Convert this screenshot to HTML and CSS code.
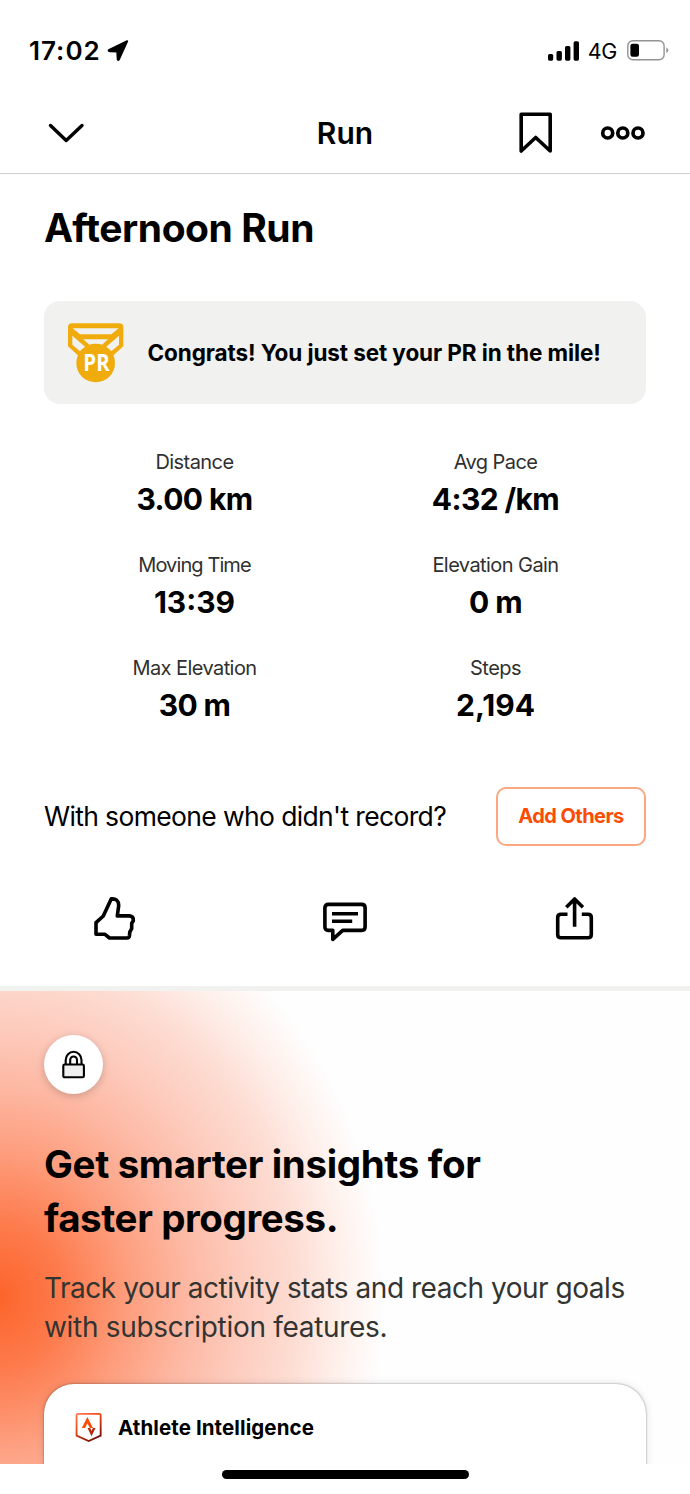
FILE: index.html
```html
<!DOCTYPE html>
<html lang="en">
<head>
<meta charset="utf-8">
<title>Afternoon Run</title>
<link rel="stylesheet" href="styles.css">
</head>
<body>
<div class="screen">
  <header class="status">
    <div class="status-left">
      <span class="clock">17:02</span>
      <svg width="22" height="22" viewBox="0 0 22 22"><path d="M20.2 1.2 11.8 19.6Q11 20.600 10.700 19L10.300 11.600 2.800 11.200Q.8 10.900 2.300 9.800Z" stroke="#000" stroke-width="2" stroke-linejoin="round"/></svg>
    </div>
    <div class="status-right">
      <svg width="32" height="20" viewBox="0 0 32 20"><rect x="0" y="13" width="5.200" height="6.700" rx="1.6"/><rect x="8.500" y="10" width="5.400" height="9.700" rx="1.6"/><rect x="17" y="5" width="5.400" height="14.700" rx="1.6"/><rect x="25.600" y=".3" width="5.400" height="19.400" rx="1.6"/></svg>
      <span class="network">4G</span>
      <svg width="42" height="21" viewBox="0 0 42 21"><rect x=".8" y=".8" width="36.300" height="19" rx="5" fill="none" stroke="#939393" stroke-width="1.4"/><rect x="3.400" y="3.800" width="8.600" height="13" rx="2.2"/><path d="M39.300 7.300Q43.400 10.300 39.300 13.300Z" fill="#939393"/></svg>
    </div>
  </header>

  <nav class="nav">
    <svg width="38" height="20" viewBox="0 0 38 20"><path d="M3.500 2.500 19.200 17.500 35 2.500" fill="none" stroke="#000" stroke-width="3.400" stroke-linejoin="round" stroke-linecap="round"/></svg>
    <span class="nav-title">Run</span>
    <div class="nav-actions">
      <svg width="34" height="42" viewBox="0 0 34 42"><path d="M2.200 2.300H31.200V39L16.700 25.500 2.200 39Z" fill="none" stroke="#000" stroke-width="3.600" stroke-linejoin="round"/></svg>
      <svg width="46" height="16" viewBox="0 0 46 16"><g fill="none" stroke="#000" stroke-width="3.700"><circle cx="7.700" cy="8" r="5"/><circle cx="22.800" cy="8" r="5"/><circle cx="38" cy="8" r="5"/></g></svg>
    </div>
  </nav>

  <main class="activity">
    <h1 class="title">Afternoon Run</h1>

    <div class="banner">
      <svg width="56" height="60" viewBox="114 98 168 180">
        <path fill="#f0ac0c" d="M126 99H268Q280 99 280 111V168L238 206H156L114 168V111Q114 99 126 99Z"/>
        <path fill="#f1f1ef" d="M128 114H266L244 132H150ZM127 136 166 170 150 183 127 163ZM267 136 228 170 244 183 267 163ZM160 147H234L216 163H178Z"/>
        <circle cx="197" cy="218" r="58" fill="#f0ac0c"/>
        <text class="medal-text" x="160" y="242" textLength="79" lengthAdjust="spacingAndGlyphs">PR</text>
      </svg>
      <span class="banner-text">Congrats! You just set your PR in the mile!</span>
    </div>

    <div class="stats">
      <div class="stat"><span class="label">Distance</span><span class="value">3.00 km</span></div>
      <div class="stat"><span class="label">Avg Pace</span><span class="value">4:32 /km</span></div>
      <div class="stat"><span class="label label-tight">Moving Time</span><span class="value value-digits">13:39</span></div>
      <div class="stat"><span class="label">Elevation Gain</span><span class="value">0 m</span></div>
      <div class="stat"><span class="label">Max Elevation</span><span class="value">30 m</span></div>
      <div class="stat"><span class="label">Steps</span><span class="value value-digits">2,194</span></div>
    </div>

    <div class="others">
      <span class="others-text">With someone who didn't record?</span>
      <button class="others-button">Add Others</button>
    </div>
  </main>

  <div class="actions">
    <svg width="48" height="48" viewBox="0 0 48 48"><path d="M20.200 3.900Q27.700 3.300 27.700 10.500L26.300 20.900H38.500Q42.700 21.300 42.300 25.700L40.700 28.300 40.700 33.700 38.800 37 38.500 40.500Q38.200 43 36 43H18.500L13.700 39.200H5V27.700L12.300 21Z"/></svg>
    <svg width="48" height="48" viewBox="0 0 48 48"><path d="M7.300 9.400H40.700Q44.100 9.400 44.100 12.800V32Q44.100 35.400 40.700 35.400H21.700L11.800 44.400V35.400H7.300Q3.900 35.400 3.900 32V12.800Q3.900 9.400 7.300 9.400ZM11 18.700H37M11 26.300H31.200"/></svg>
    <svg width="48" height="48" viewBox="0 0 48 48"><path d="M16.500 19.200H10Q6.700 19.200 6.700 22.500V39.500Q6.700 42.800 10 42.800H37Q40.300 42.800 40.300 39.500V22.500Q40.300 19.200 37 19.200H30.800M23.600 31.800V3.800M15.300 12.300 23.600 3.900 31.900 12.300"/></svg>
  </div>

  <section class="promo">
    <div class="lock">
      <svg width="24" height="30" viewBox="0 0 24 30"><g fill="none" stroke="#000" stroke-width="2.100"><path d="M3.700 15.500V10A7.900 8.200 0 0 1 19.500 10V15.500M8.200 15.500V10.200A3.400 3.700 0 0 1 15 10.200V15.500"/><rect x="1.300" y="14.500" width="20.600" height="12.800" rx="1.4" fill="#efefef"/></g></svg>
    </div>
    <h2 class="promo-title">Get smarter insights for<br><span class="promo-line">faster progress.</span></h2>
    <p class="promo-text">Track your activity stats and reach your goals<br><span class="promo-text-end">with subscription features.</span></p>
    <div class="insight">
      <svg width="27.4" height="30.6" viewBox="134 126 82 92">
        <defs><linearGradient id="shield" x1="0" y1="0" x2=".6" y2="1"><stop offset="0" stop-color="#ff7b50"/><stop offset=".45" stop-color="#f04713"/><stop offset="1" stop-color="#7d1209"/></linearGradient></defs>
        <path d="M143 131.500H207Q211 131.500 211 135.500V197L175 213.500 138.500 197V135.500Q138.500 131.500 143 131.500Z" fill="none" stroke="url(#shield)" stroke-width="5.500"/>
        <path d="M171 141 188 174H178.500L171 160 164 174H154.500Z" fill="#fc4c02"/>
        <path d="M171.500 174H179.500L183.500 183 187.500 174H195.500L183.500 199Z" fill="#b52a0c"/>
      </svg>
      <span class="insight-title">Athlete Intelligence</span>
    </div>
  </section>

  <footer class="home"><div class="home-bar"></div></footer>
</div>
</body>
</html>
```
FILE: styles.css
```css
* { box-sizing: border-box; }
body { margin: 0; background: #fff; color: #000; font-family: Inter, "Liberation Sans", sans-serif; }
svg { display: block; flex: none; }
h1, h2, p { margin: 0; }
span, h1, h2, p { white-space: nowrap; }

.screen { width: 690px; height: 1494px; display: flex; flex-direction: column; overflow: hidden; }

.status { height: 94px; padding: 7px 21px 0 29px; display: flex; justify-content: space-between; align-items: center; }
.status-left, .status-right { display: flex; align-items: center; }
.status-left { gap: 6px; }
.clock { font-size: 26px; font-weight: 600; letter-spacing: 1px; }
.network { font-size: 21.5px; letter-spacing: -0.4px; margin: 0 10px 0 8px; }

.nav { height: 80px; padding: 0 44px 1px 47px; border-bottom: 1.5px solid #cfcfcf; display: grid; grid-template-columns: 1fr auto 1fr; align-items: center; }
.nav-title { margin-left: -3px; font-size: 30px; font-weight: 600; line-height: 36px; }
.nav-actions { display: flex; align-items: center; justify-content: flex-end; gap: 47px; }

.activity { height: 672px; padding: 30px 44px 0; }
.title { font-size: 39px; font-weight: 700; line-height: 48px; letter-spacing: -0.45px; }
.banner { height: 103px; margin-top: 49px; padding-left: 24px; border-radius: 16px; background: #f1f1ef; display: flex; align-items: center; gap: 23.5px; }
.medal-text { font: 700 70px "Open Sans", sans-serif; fill: #fff; }
.banner-text { font-size: 22.5px; font-weight: 700; letter-spacing: -0.1px; }

.stats { margin-top: 45px; display: grid; grid-template-columns: 1fr 1fr; row-gap: 33px; }
.stat { height: 70px; display: flex; flex-direction: column; align-items: center; gap: 5px; }
.label { font-size: 20px; line-height: 26px; letter-spacing: -0.57px; color: #303030; }
.label-tight { letter-spacing: -0.9px; }
.value { font-size: 30px; font-weight: 700; line-height: 38px; letter-spacing: -0.6px; }
.value-digits { letter-spacing: 0; }

.others { height: 59px; margin-top: 62px; display: flex; align-items: center; justify-content: space-between; }
.others-text { padding-bottom: 2px; font-size: 26.5px; letter-spacing: -0.64px; }
.others-button { width: 150px; height: 59px; padding: 0 0 1px; border: 2px solid #fda780; border-radius: 10px; background: #fff; color: #fc4c02; font: 700 20px Inter, sans-serif; letter-spacing: -0.55px; }

.actions { height: 145px; padding: 49px 91px 48px; border-bottom: 5px solid #f1f1ef; display: flex; justify-content: space-between; }
.actions path { fill: none; stroke: #000; stroke-width: 3.6; stroke-linejoin: round; }

.promo { height: 473px; padding: 44px 44px 0; overflow: hidden; background: radial-gradient(388px 430px at -3px 306px, #fc642a 0%, #fd7b4d 17%, #fd9e7e 34%, #fdb8a3 49%, #fdcdbf 64%, #fddbd1 76%, #fef0eb 89%, #fefefe 100%); }
.lock { width: 59px; height: 59px; border-radius: 50%; background: #fff; box-shadow: 0 2px 8px rgba(0, 0, 0, 0.2); display: flex; align-items: center; justify-content: center; }
.promo-title { margin-top: 43px; font-size: 38.5px; font-weight: 700; line-height: 54px; letter-spacing: -0.35px; }
.promo-line { letter-spacing: -0.4px; }
.promo-text { margin-top: 24px; font-size: 28px; line-height: 39px; letter-spacing: -0.47px; color: #333431; }
.promo-text-end { letter-spacing: -0.3px; }
.insight { height: 120px; margin-top: 37px; padding: 28px 0 0 31px; border-radius: 30px 30px 0 0; background: #fff; box-shadow: 0 0 2px rgba(0, 0, 0, 0.45), 0 0 8px rgba(0, 0, 0, 0.12); display: flex; align-items: flex-start; gap: 15.5px; }
.insight-title { font-size: 20.5px; font-weight: 700; line-height: 31px; letter-spacing: 0.1px; }

.home { flex: 1; display: flex; justify-content: center; align-items: flex-start; padding: 6px 0 0 1px; }
.home-bar { width: 247px; height: 9px; border-radius: 5px; background: #000; }
```
